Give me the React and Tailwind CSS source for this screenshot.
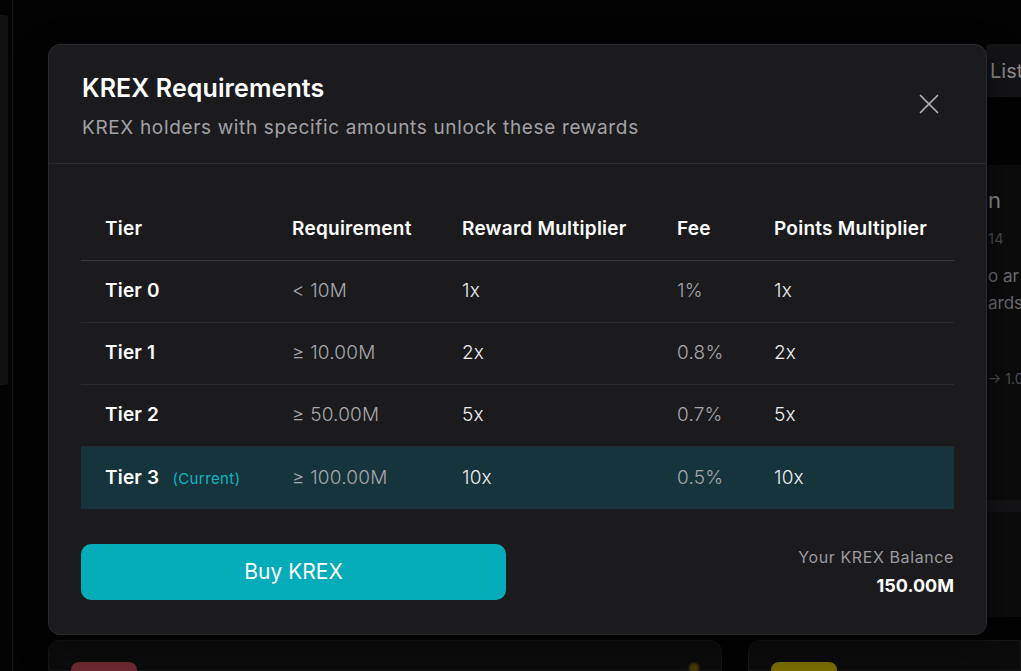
import { X } from 'lucide-react';

const tiers = [
  { name: 'Tier 0', req: '< 10M', reward: '1x', fee: '1%', points: '1x' },
  { name: 'Tier 1', req: '≥ 10.00M', reward: '2x', fee: '0.8%', points: '2x' },
  { name: 'Tier 2', req: '≥ 50.00M', reward: '5x', fee: '0.7%', points: '5x' },
  { name: 'Tier 3', req: '≥ 100.00M', reward: '10x', fee: '0.5%', points: '10x', current: true },
];

const gridCols = 'grid grid-cols-[187px_170px_215px_97px_203px] items-center';

function Backdrop() {
  return (
    <div className="flex h-[671px] w-[1021px] overflow-hidden bg-[#030303]">
      <div className="flex w-[48px] shrink-0">
        <div className="mt-[15px] h-[370px] w-[8px] rounded-r bg-[#111113]" />
        <div className="ml-[4px] h-full w-px bg-[#161618]" />
      </div>
      <div className="flex flex-1 flex-col">
        <div className="flex h-[640px] gap-[10px]">
          <div className="flex-1" />
          <div className="mt-[44px] flex w-[35px] flex-col overflow-hidden">
            <div className="flex h-[53px] items-center overflow-hidden whitespace-nowrap rounded-tl bg-[#141416] pl-[4px] text-[20px] text-[#8a8a8e]">List</div>
            <div className="h-[68px]" />
            <div className="flex h-[335px] flex-col overflow-hidden whitespace-nowrap rounded-l bg-[#0c0c0d] pl-[2px] pt-[24px] text-[17px] leading-none text-[#6b6b70]">
              <span className="text-[22px] text-[#8c8c90]">n</span>
              <span className="mt-[20px] text-[15px] text-[#4a4a4e]">14</span>
              <span className="mt-[22px]">o ar</span>
              <span className="mt-[10px]">ards</span>
              <span className="mt-[60px] text-[14px] text-[#4d4d52]">→ 1.0</span>
            </div>
            <div className="h-[12px] bg-[#141416]" />
            <div className="h-[105px] bg-[#0c0c0d]" />
          </div>
        </div>
        <div className="flex flex-1 gap-[26px]">
          <div className="relative w-[674px] rounded-t-xl border border-[#17171a] bg-[#0c0c0d]">
            <div className="absolute left-[22px] top-[21px] h-[20px] w-[66px] rounded-t-lg bg-[#6e2a30]" />
            <div className="absolute left-[640px] top-[22px] h-[10px] w-[10px] rounded-full bg-[#4a3a08] blur-[1px]" />
          </div>
          <div className="relative flex-1 rounded-tl-xl border border-[#17171a] bg-[#0c0c0d]">
            <div className="absolute left-[22px] top-[21px] h-[20px] w-[66px] rounded-t-lg bg-[#7a6e00]" />
          </div>
        </div>
      </div>
    </div>
  );
}

export default function App() {
  return (
    <div className="relative h-[671px] w-[1021px] overflow-hidden font-['Inter','Liberation_Sans',sans-serif]">
      <Backdrop />
      <div className="absolute left-[48px] top-[44px] h-[591px] w-[939px] rounded-xl border border-[#2b2b2f] bg-[#1b1b1e] shadow-[0_10px_30px_rgba(0,0,0,0.6)]">
        <div className="flex items-start justify-between border-b border-[#2c2c30] px-[33px] pb-[22px] pt-[27px]">
          <div>
            <h2 className="text-[25px] font-semibold leading-[32px] tracking-[0.1px] text-white">KREX Requirements</h2>
            <p className="mt-[11px] text-[19px] leading-[26px] tracking-[0.65px] text-[#a1a1a6]">
              KREX holders with specific amounts unlock these rewards
            </p>
          </div>
          <button className="mr-[7px] mt-[15px] text-[#b4b4b8]">
            <X size={34} strokeWidth={1.2} />
          </button>
        </div>

        <div className="px-[32px] pt-[36px]">
          <div className={gridCols + ' h-[61px] border-b border-[#3a3a3e] pb-[2px] text-[19px] font-semibold tracking-[0.25px] text-white'}>
            <div className="pl-[24px]">Tier</div>
            <div className="pl-[24px]">Requirement</div>
            <div className="pl-[24px]">Reward Multiplier</div>
            <div className="pl-[24px]">Fee</div>
            <div className="pl-[24px]">Points Multiplier</div>
          </div>
          {tiers.map((t, i) => (
            <div
              key={t.name}
              className={
                gridCols +
                ' h-[62px] text-[19px] tracking-[0.2px] ' +
                (t.current ? 'bg-[#16343b]' : i < tiers.length - 1 ? 'border-b border-[#2a2a2e]' : '')
              }
            >
              <div className="flex items-baseline pl-[24px] font-semibold text-white">
                {t.name}
                {t.current && (
                  <span className="ml-[13px] text-[15px] font-normal tracking-[0.4px] text-[#10b5c4]">(Current)</span>
                )}
              </div>
              <div className="pl-[24px] font-light text-[#a6a6ab]">{t.req}</div>
              <div className="pl-[24px] font-light text-[#ededef]">{t.reward}</div>
              <div className="pl-[24px] font-light text-[#a6a6ab]">{t.fee}</div>
              <div className="pl-[24px] font-light text-[#ededef]">{t.points}</div>
            </div>
          ))}

          <div className="mt-[35px] flex items-center justify-between">
            <button className="flex h-[56px] w-[425px] items-center justify-center rounded-[10px] bg-[#04abb9] text-[21px] text-white">
              Buy KREX
            </button>
            <div className="text-right">
              <div className="text-[16px] leading-[20px] tracking-[0.6px] text-[#9a9a9f]">Your KREX Balance</div>
              <div className="mt-[8px] text-[18px] font-bold leading-[22px] text-white">150.00M</div>
            </div>
          </div>
        </div>
      </div>
    </div>
  );
}
